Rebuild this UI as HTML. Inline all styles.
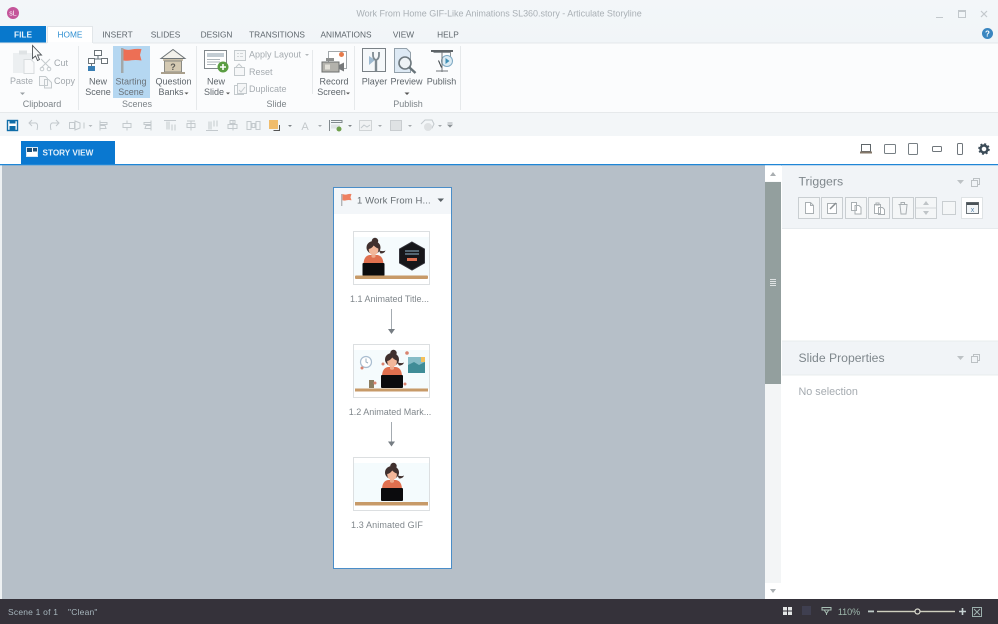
<!DOCTYPE html>
<html><head><meta charset="utf-8"><title>Work From Home GIF-Like Animations SL360.story - Articulate Storyline</title>
<style>
html,body{margin:0;padding:0;background:#fff;width:998px;height:624px;overflow:hidden}
svg{display:block;filter:blur(.35px)}
text{font-family:"Liberation Sans",sans-serif;font-size:9px;fill:#8a9096}
.t{font-size:9px;fill:#5f666c;text-anchor:middle}
.d{font-size:9px;fill:#a5abb0}
.g{font-size:9px;fill:#7d8489;text-anchor:middle}
.tab{font-size:8.300px;fill:#5e666c;text-anchor:middle}
.i{fill:none;stroke:#c4cacd;stroke-width:1}
.k{fill:none;stroke:#66727a;stroke-width:1}
.q{fill:none;stroke:#c3c9cd;stroke-width:1}
.b{fill:#f4f6f7;stroke:#c9ced1;stroke-width:1}
</style></head><body>
<svg width="998" height="624" viewBox="0 0 998 624" xmlns="http://www.w3.org/2000/svg">
<defs>
<linearGradient id="top" x1="0" y1="0" x2="0" y2="1"><stop offset="0" stop-color="#f3f6f9"/><stop offset="1" stop-color="#f1f5f8"/></linearGradient>
<symbol id="woman" viewBox="-15 -15 30 45" width="30" height="45" overflow="visible">
<path d="M-10 16q0-9 6-10h8q6 1 6 10z" fill="#e0704f"/>
<path d="M-2 4h4v4q-2 1.500-4 0z" fill="#edab8e"/>
<circle cx="1.500" cy="-8" r="3.200" fill="#40302e"/>
<ellipse cx="0" cy="-1.500" rx="7" ry="6.500" fill="#40302e"/>
<path d="M5 1q4 2 7 .5q-1 3-5 3z" fill="#40302e"/>
<path d="M-4.800 0q3-.5 5-3.500q2.500 2.500 4.600 3q.5 6-4.800 6.500q-4.800-.5-4.800-6z" fill="#f2b79a"/>
<rect x="-11" y="14" width="22" height="13" rx="1" fill="#0b0b0d"/>
</symbol>
</defs>

<!-- base -->
<rect width="998" height="624" fill="#fff"/>
<rect width="998" height="43" fill="url(#top)"/>
<rect y="43" width="998" height="69" fill="#fbfcfd"/>
<rect y="112" width="998" height="1" fill="#e6e9eb"/>
<rect y="113" width="998" height="23" fill="#f3f6f8"/>

<!-- title bar -->
<circle cx="13" cy="13" r="6" fill="#c4559a"/>
<text x="13" y="15.500" text-anchor="middle" style="font-size:7px;fill:#fff">sL</text>
<text x="499" y="16.500" text-anchor="middle" style="font-size:9px;fill:#a9b0b5;letter-spacing:-.03px">Work From Home GIF-Like Animations SL360.story - Articulate Storyline</text>
<rect x="936" y="17" width="7" height="1" fill="#c2c8cc"/>
<rect x="958.500" y="10.500" width="7" height="7" fill="none" stroke="#c2c8cc"/><rect x="958" y="10" width="8" height="2" fill="#c2c8cc"/>
<path d="M981 11l6 6m0-6l-6 6" stroke="#c2c8cc" stroke-width="1.200" fill="none"/>

<!-- tabs -->
<rect x="0" y="26" width="46" height="17" fill="#0878cc"/>
<text x="23" y="37.500" text-anchor="middle" style="font-size:8.300px;font-weight:bold;fill:#eaf4fb">FILE</text>
<path d="M47.500 43V26.500H92.500V43" fill="#fff" stroke="#e2e6e9"/>
<rect x="48" y="42" width="44" height="2" fill="#fbfcfd"/>
<text x="70" y="37.500" class="tab" style="fill:#2e8fd2">HOME</text>
<text x="117.500" y="37.500" class="tab">INSERT</text>
<text x="165.500" y="37.500" class="tab">SLIDES</text>
<text x="216.500" y="37.500" class="tab">DESIGN</text>
<text x="277" y="37.500" class="tab">TRANSITIONS</text>
<text x="346" y="37.500" class="tab">ANIMATIONS</text>
<text x="403.500" y="37.500" class="tab">VIEW</text>
<text x="448" y="37.500" class="tab">HELP</text>
<rect y="42.500" width="47" height="1" fill="#e4e8ea"/><rect x="93" y="42.500" width="905" height="1" fill="#e4e8ea"/>
<circle cx="987.500" cy="33.500" r="5.500" fill="#3a86c0"/>
<text x="987.500" y="36.500" text-anchor="middle" style="font-size:8px;font-weight:bold;fill:#fff">?</text>

<!-- ribbon group separators -->
<g fill="#e6e9eb">
<rect x="78" y="46" width="1" height="64"/><rect x="196" y="46" width="1" height="64"/>
<rect x="312" y="50" width="1" height="44"/><rect x="354" y="46" width="1" height="64"/><rect x="460" y="46" width="1" height="64"/>
</g>

<!-- clipboard -->
<rect x="13" y="53" width="20" height="20" fill="#eceff1"/><rect x="19" y="50.500" width="8" height="4" fill="#dfe3e5"/>
<path d="M24 59.500h7l3 3v11h-10z" fill="#f8f9fa" stroke="#d8dcde"/>
<path d="M41 59l9 9m0-9l-9 9" class="i"/><circle cx="42" cy="69" r="1.800" class="i"/><circle cx="49" cy="69" r="1.800" class="i"/>
<text x="54" y="66" class="d" style="fill:#a2a8ad">Cut</text>
<path d="M39.500 76.500h6l2 2v7h-8z M44.500 79.500h4l3 3v5.500h-7z" class="i" style="fill:#f7f8f9"/>
<text x="54" y="84" class="d" style="fill:#a2a8ad">Copy</text>
<text x="21.500" y="84" class="d" text-anchor="middle" style="fill:#a2a8ad">Paste</text>
<path d="M20 92.500h5l-2.500 2.500z" fill="#9ba1a5"/>
<text x="42" y="107" class="g">Clipboard</text>

<!-- scenes -->
<rect x="113" y="46" width="37" height="52" fill="#b5d7f1"/>
<rect x="94.500" y="50.500" width="7" height="5" fill="#fff" stroke="#6c7479"/>
<path d="M98 55.500v3.500M91 62v-3h13v3" class="k"/>
<rect x="88.500" y="58.500" width="6" height="5" fill="#fff" stroke="#6c7479"/><rect x="101.500" y="58.500" width="6" height="5" fill="#fff" stroke="#6c7479"/>
<path d="M91.500 63.500V66" class="k"/><rect x="88" y="66" width="7" height="5" fill="#3a7fb4"/>
<text x="98" y="84.500" class="t">New</text><text x="98" y="95" class="t">Scene</text>
<rect x="121" y="48" width="2.500" height="25" fill="#a2a8aa"/>
<path d="M123.500 49q4 1.500 8 .5t10-.5l-1.500 6 1.500 5.500q-6-1-10-.2t-8 .2z" fill="#ed6f55"/>
<text x="131" y="84.500" class="t" style="fill:#6a7178">Starting</text><text x="131" y="95" class="t" style="fill:#6a7178">Scene</text>
<path d="M161 58.500l12-9 12 9z" fill="#f3f1ea" stroke="#6f7578"/>
<rect x="163" y="59" width="20" height="2" fill="#c9bfa9"/>
<rect x="164.500" y="61" width="17" height="11" fill="#d4c9b2" stroke="#8a8a84"/>
<rect x="161" y="72" width="24" height="2" fill="#a99f8c"/>
<text x="173" y="70" text-anchor="middle" style="font-size:9px;font-weight:bold;fill:#5b5a55">?</text>
<text x="173.500" y="84.500" class="t">Question</text><text x="171" y="95" class="t">Banks</text>
<path d="M184.500 92.500h4l-2 2z" fill="#555"/>
<text x="137" y="107" class="g">Scenes</text>

<!-- slide -->
<rect x="204.500" y="50.500" width="22" height="18" fill="#fff" stroke="#80878b"/>
<rect x="207" y="53" width="17" height="4" fill="#c2ccd3"/>
<path d="M207 59.500h13M207 62h13M207 64.500h9" stroke="#aeb6bb" stroke-width="1"/>
<circle cx="223" cy="67" r="5.500" fill="#5b9d43"/><path d="M220 67h6m-3-3v6" stroke="#fff" stroke-width="1.600"/>
<text x="216" y="84.500" class="t">New</text><text x="214" y="95" class="t">Slide</text>
<path d="M226 92.500h4l-2 2z" fill="#555"/>
<rect x="234.500" y="50.500" width="11" height="10" class="i" style="fill:#f4f6f7"/><path d="M237 53.500h2m1 0h3m-6 3h2m1 0h3" stroke="#d2d6d8"/>
<text x="249" y="57.500" class="d">Apply Layout</text><path d="M305 54h4l-2 2z" fill="#b3b8bb"/>
<rect x="234.500" y="67.500" width="10" height="8" class="i" style="fill:#f6f7f8"/><path d="M236 67l3-3 3 3" class="i"/>
<text x="249" y="75" class="d">Reset</text>
<rect x="234.500" y="85.500" width="9" height="9" class="i"/><rect x="237.500" y="83.500" width="9" height="10" class="i" style="fill:#f5f6f7"/><path d="M239 90l2 2 4-5" class="i"/>
<text x="249" y="92" class="d">Duplicate</text>
<text x="276.500" y="107" class="g">Slide</text>

<!-- record -->
<rect x="328.500" y="51.500" width="18" height="17" fill="#fff" stroke="#a2a8ab"/><circle cx="341.500" cy="54.500" r="2.500" fill="#e67a4a"/>
<rect x="322" y="62" width="17" height="10" fill="#b3b2ac" stroke="#6e706f"/><rect x="325" y="64.500" width="5" height="5" fill="#e2e0d8"/>
<path d="M339 65l5-2.500v9L339 69z" fill="#76797a"/><rect x="326" y="58" width="8" height="3" fill="#8d8f8e"/>
<text x="334" y="84.500" class="t">Record</text><text x="331.500" y="95" class="t">Screen</text>
<path d="M346 92.500h4l-2 2z" fill="#555"/>

<!-- publish group -->
<path d="M362.500 48.500h23v23h-23z" fill="#f5f8fa" stroke="#7a8186"/>
<path d="M369 56l6 4-6 5z" fill="#9ebad0"/>
<path d="M376 60v11" stroke="#7e8a91" stroke-width="2.400" fill="none"/>
<path d="M373 52v3q0 4 3 5 3-1 3-5v-3" stroke="#7e8a91" stroke-width="1.800" fill="none"/>
<text x="374.500" y="84.500" class="t">Player</text>
<path d="M394.500 48.500h12l4 4v20h-16z" fill="#dde9f4" stroke="#93a0aa"/>
<circle cx="405" cy="63" r="6" fill="#eef3f6" stroke="#6d787e" stroke-width="1.600"/><path d="M409.500 67.500l6 5.500" stroke="#68747a" stroke-width="2.400"/>
<text x="406.500" y="84.500" class="t">Preview</text><path d="M404.500 92.500h5l-2.500 2.500z" fill="#555"/>
<path d="M431 51h22" stroke="#5e6468" stroke-width="2"/><path d="M433.500 52.500h17v5" fill="none" stroke="#8d9397"/>
<circle cx="447" cy="61" r="5.500" fill="#dcebf3" stroke="#7ea9c3"/><path d="M445.500 58l4 3-4 3z" fill="#3f8fb5"/>
<path d="M442 52v20M436 71h12" stroke="#70767a"/><path d="M438.500 60.500l3 7" stroke="#3c4347"/>
<text x="441.500" y="84.500" class="t">Publish</text>
<text x="408" y="107" class="g">Publish</text>

<!-- quick toolbar -->
<rect x="7.500" y="120.500" width="10" height="10" fill="#fff" stroke="#0f6da8" stroke-width="1.400"/>
<rect x="9.500" y="120" width="6" height="3.500" fill="#0f6da8"/><rect x="9.500" y="126" width="6" height="4" fill="#0f6da8"/>
<path d="M37 130q2-8-3-7h-5m3-3l-3 3 3 3" class="q" stroke-width="1.400"/>
<path d="M51 130q-2-8 3-7h5m-3-3l3 3-3 3" class="q"/>
<g class="q">
<rect x="69.500" y="122.500" width="5" height="6"/><path d="M75 121l5 2v5l-5 2zM84 122.500v6"/>
<path d="M100 120.500v10m0-8h7v2h-7m0 1h5l1 3h-6"/>
<path d="M127 120.500v3m0 4v3m-4-7h8v4h-8z"/>
<path d="M151 120.500v10m0-8h-7v2h7m0 1h-5l-1 3h6"/>
<path d="M164 120.500h12m-9 1v8m2-8v8m3-5v6m3-6v6"/>
<path d="M191 120.500v10m-4-7h8v4h-8z M187 121h8"/>
<path d="M206 130.500h12m-9-1v-8m2 8v-8m3 5v-6m3 6v-6"/>
<path d="M228 124.500h9v4h-9zM233 120.500v10M230 120.500h5v3h-5z"/>
<path d="M247 121.500h4v8h-4zM252 123.500h3v4h-3zM256 121.500h4v8h-4z"/>
</g>
<path d="M88.500 125h4l-2 2z" fill="#b5babd"/>
<rect x="269" y="120" width="9" height="9" fill="#f0bc6c"/><path d="M279.500 125v5.500h-6" fill="none" stroke="#555"/>
<path d="M288 125h4l-2 2z" fill="#808589"/>
<text x="305" y="130" text-anchor="middle" style="font-size:11px;fill:#c3c8cb">A</text><path d="M318 125h4l-2 2z" fill="#a5aaad"/>
<path d="M329.500 120v11M331 120.500h11v2h-11" stroke="#828a8e" fill="none"/><rect x="331" y="124.500" width="9" height="4" fill="#dfe3e5"/><circle cx="339" cy="129" r="2.500" fill="#6fa04c"/>
<path d="M348 125h4l-2 2z" fill="#808589"/>
<rect x="359.500" y="120.500" width="12" height="10" fill="#f0f2f3" stroke="#d0d4d6"/><path d="M361 128l3-3 3 2 3-2" class="q"/><path d="M378 125h4l-2 2z" fill="#a5aaad"/>
<rect x="390.500" y="120.500" width="11" height="10" fill="#dfe2e4" stroke="#c9cdd0"/><path d="M408 125h4l-2 2z" fill="#a5aaad"/>
<path d="M421 124l4-4h7l2 4-2 4h-2" class="q"/><circle cx="428" cy="127" r="4" fill="#dee1e3"/><path d="M438 125h4l-2 2z" fill="#a5aaad"/>
<path d="M447.500 123h5M448 125h4l-2 2z" stroke="#8b9195" stroke-width=".8" fill="#8b9195"/>

<!-- story view tab row -->
<rect x="21" y="141" width="94" height="23" fill="#0a78d0"/>
<rect x="26.500" y="147.500" width="11" height="9" fill="#fff" stroke="#d6e7f5"/><rect x="27" y="148" width="5" height="4" fill="#1d4f78"/><rect x="33" y="148" width="4" height="3.500" fill="#1d4f78"/>
<text x="42.500" y="155.500" style="font-size:8.200px;font-weight:bold;fill:#e3f0fa">STORY VIEW</text>
<rect y="164" width="998" height="1.400" fill="#1f86d6"/>
<!-- device icons -->
<rect x="861.500" y="144.500" width="9" height="7" fill="#fff" stroke="#5f666a"/><rect x="860" y="151.500" width="12" height="2" fill="#85786a"/>
<rect x="884.500" y="144.500" width="11" height="9" rx="1" fill="#fff" stroke="#777f84"/>
<rect x="908.500" y="143.500" width="9" height="11" rx="1" fill="#fff" stroke="#777f84"/>
<rect x="932.500" y="146.500" width="9" height="5" rx="1" fill="#fff" stroke="#6f767b"/>
<rect x="957.500" y="143.500" width="5" height="11" rx="1" fill="#fff" stroke="#6f767b"/>
<circle cx="984" cy="149" r="3.500" fill="none" stroke="#3c4c58" stroke-width="2.400"/>
<circle cx="984" cy="149" r="5" fill="none" stroke="#3c4c58" stroke-width="1.600" stroke-dasharray="2 1.930"/>

<!-- canvas -->
<rect x="0" y="165.400" width="2" height="434" fill="#eef1f3"/>
<rect x="2" y="165.400" width="763" height="434" fill="#b6bfc8"/>
<!-- scrollbar -->
<rect x="765" y="165.400" width="16" height="434" fill="#f3f5f6"/>
<rect x="765" y="165.400" width="16" height="16" fill="#fff"/>
<path d="M770 176l3-4 3 4z" fill="#a9aeb1"/>
<rect x="765" y="182" width="16" height="202" fill="#939f9e"/>
<path d="M770 279.500h6M770 281.500h6M770 283.500h6M770 285.500h6" stroke="#dfe3e3" stroke-width="1"/>
<rect x="765" y="583" width="16" height="16" fill="#fff"/>
<path d="M770 589l3 4 3-4z" fill="#a9aeb1"/>

<!-- story card -->
<rect x="333.500" y="187.500" width="118" height="381" fill="#fff" stroke="#4a8dc8"/>
<rect x="334" y="188" width="117" height="26" fill="#f3f6f9"/>
<rect x="341" y="194" width="1.400" height="12" fill="#b3b6b8"/>
<path d="M342.500 194q3 1 5 .3t4-.3l-1 3.300 1 3q-3-.6-5 0t-4 0z" fill="#ee8060"/>
<text x="357" y="203.500" style="font-size:9.500px;fill:#666d72;letter-spacing:.1px">1 Work From H...</text>
<path d="M437.500 198.500h6.500l-3.250 3.500z" fill="#5a6166"/>

<!-- thumb 1 -->
<rect x="353.500" y="231.500" width="76" height="53" fill="#fff" stroke="#dcdfe1"/>
<rect x="354" y="237" width="75" height="39" fill="#f5fbfd"/>
<use href="#woman" x="358.500" y="234" width="30" height="45"/>
<rect x="355" y="275.500" width="73" height="3.500" rx="1" fill="#c79a68"/>
<path d="M412 242l12.500 7v14l-12.500 7-12.500-7v-14z" fill="#17171a" stroke="#33333a"/>
<path d="M405 251h14M405 254h14" stroke="#8fb3c8" stroke-width="1"/>
<rect x="407" y="258" width="10" height="3" fill="#dd6f50"/>
<text x="389.500" y="302" text-anchor="middle" style="font-size:9px;fill:#80878c">1.1 Animated Title...</text>
<path d="M391.500 309v24" stroke="#a4abb1"/><path d="M388 329h7l-3.500 5z" fill="#767d83"/>

<!-- thumb 2 -->
<rect x="353.500" y="344.500" width="76" height="53" fill="#fff" stroke="#dcdfe1"/>
<rect x="354" y="350" width="75" height="39" fill="#f5fbfd"/>
<use href="#woman" x="377" y="346" width="30" height="45"/>
<rect x="355" y="388.500" width="73" height="3" fill="#c79a68"/>
<circle cx="366" cy="362" r="5.500" fill="#fff" stroke="#a9bdd0" stroke-width="1.200"/><path d="M366 358.500V362l2 1" stroke="#9aaebd" fill="none"/>
<rect x="408" y="357" width="17" height="16" fill="#86bcc7"/><path d="M408 365l6-3 5 3 6-3v11h-17z" fill="#3f8c97"/><rect x="421" y="357" width="4" height="5" fill="#f3c05c"/>
<rect x="369" y="380" width="5" height="8" fill="#8a7c60"/>
<g fill="#d9836f"><circle cx="362" cy="368" r="1.500"/><circle cx="383" cy="364" r="1.500"/><circle cx="407" cy="353" r="1.800"/><circle cx="375" cy="383" r="1.500"/><circle cx="405" cy="384" r="1.500"/></g>
<text x="390" y="415" text-anchor="middle" style="font-size:9px;fill:#80878c">1.2 Animated Mark...</text>
<path d="M391.500 422v24" stroke="#a4abb1"/><path d="M388 441.500h7l-3.500 5z" fill="#767d83"/>

<!-- thumb 3 -->
<rect x="353.500" y="457.500" width="76" height="53" fill="#fff" stroke="#dcdfe1"/>
<rect x="354" y="463" width="75" height="39" fill="#f4fbfd"/>
<use href="#woman" x="377" y="459" width="30" height="45"/>
<rect x="355" y="502" width="73" height="3.500" fill="#c79a68"/>
<text x="351" y="528" style="font-size:9px;fill:#80878c;letter-spacing:.12px">1.3 Animated GIF</text>

<!-- right panel -->
<rect x="782" y="165.400" width="216" height="434" fill="#fff"/>
<rect x="782" y="165.400" width="216" height="63" fill="#f1f4f7"/>
<rect x="782" y="228" width="216" height="1" fill="#e6eaed"/>
<text x="798.500" y="185.500" style="font-size:12.300px;fill:#7f878c">Triggers</text>
<path d="M957 180h7l-3.500 4z" fill="#bdc2c5"/>
<rect x="973.500" y="178.500" width="6" height="6" fill="none" stroke="#bcc1c4"/><rect x="971.500" y="180.500" width="6" height="6" fill="#f1f4f7" stroke="#bcc1c4"/>
<g class="b">
<rect x="798.500" y="197.500" width="21" height="21"/><rect x="821.500" y="197.500" width="21" height="21"/><rect x="845.500" y="197.500" width="21" height="21"/><rect x="868.500" y="197.500" width="21" height="21"/><rect x="892.500" y="197.500" width="21" height="21"/><rect x="915.500" y="197.500" width="21" height="21"/><rect x="942.500" y="201.500" width="13" height="13"/>
</g>
<rect x="961.500" y="197.500" width="21" height="21" fill="#fff" stroke="#dfe3e5"/>
<path d="M805.500 202.500h5l3 3v8h-8zM810.500 202.500v3h3" fill="#fff" stroke="#a9afb2"/>
<rect x="827.500" y="203.500" width="9" height="10" fill="#fff" stroke="#a9afb2"/><path d="M830 209l6-6" stroke="#888e91" stroke-width="1.500"/>
<path d="M851.500 202.500h5v8h-5zM855 205.500h4l2 2v6.500h-6z" fill="#fff" stroke="#a9afb2"/>
<path d="M874.500 204.500h6v9h-6zM878.500 207.500h4l2 2v5h-6z M876 203h3v2h-3z" fill="#fff" stroke="#a9afb2"/>
<path d="M898.500 204.500h9M900 205l1 9h5l1-9M901 204v-1.500h3.500v1.500" fill="none" stroke="#a9afb2"/>
<path d="M923 205l3-4 3 4z" fill="#bfc4c7"/><path d="M923 211l3 4 3-4z" fill="#bfc4c7"/><path d="M916 208h20" stroke="#d2d6d8"/>
<rect x="966.500" y="202.500" width="12" height="11" fill="#f3f6f8" stroke="#6e767b"/><rect x="966.500" y="202.500" width="12" height="2.500" fill="#4a5257"/>
<text x="972.500" y="212" text-anchor="middle" style="font-size:7px;fill:#5b85ab">x</text>

<rect x="782" y="341" width="216" height="34" fill="#f1f4f7"/>
<rect x="782" y="340.500" width="216" height="1" fill="#e8ecee"/><rect x="782" y="374.500" width="216" height="1" fill="#e8ecee"/>
<text x="798.500" y="362" style="font-size:12.200px;fill:#7f878c">Slide Properties</text>
<path d="M957 356h7l-3.500 4z" fill="#bdc2c5"/>
<rect x="973.500" y="354.500" width="6" height="6" fill="none" stroke="#bcc1c4"/><rect x="971.500" y="356.500" width="6" height="6" fill="#f1f4f7" stroke="#bcc1c4"/>
<text x="798.500" y="395" style="font-size:10.800px;fill:#a5abb0">No selection</text>

<!-- status bar -->
<rect y="599" width="998" height="25" fill="#35323a"/>
<text x="8" y="615" style="font-size:8.500px;fill:#a7b6bd;letter-spacing:.2px">Scene 1 of 1</text>
<text x="68" y="615" style="font-size:8.500px;fill:#a7b6bd;letter-spacing:.2px">"Clean"</text>
<g fill="#e4e6e6"><rect x="783" y="607" width="4" height="3.500"/><rect x="788" y="607" width="4" height="3.500"/><rect x="783" y="611.500" width="4" height="3.500"/><rect x="788" y="611.500" width="4" height="3.500"/></g>
<rect x="802" y="606" width="9" height="9" fill="#3f3f50"/>
<path d="M822 607.500h9v2.500h-9zM824.500 610.500l2 3 2-3M826.500 613v2" fill="none" stroke="#a9c0b5"/>
<text x="849" y="615" text-anchor="middle" style="font-size:9px;fill:#9fb9ad">110%</text>
<rect x="868" y="610.500" width="6" height="1.800" fill="#bdc9c6"/>
<rect x="877" y="610.800" width="78" height="1.400" fill="#cfd0c0"/>
<circle cx="917.500" cy="611.500" r="2.500" fill="#35323a" stroke="#dcdcd0" stroke-width="1.200"/>
<path d="M959 611.500h7m-3.500-3.500v7" stroke="#c6d2d2" stroke-width="1.600"/>
<rect x="972.500" y="607.500" width="9" height="9" fill="none" stroke="#9db0ad"/><path d="M974 609l6 6m0-6l-6 6" stroke="#9db0ad"/>

<!-- cursor -->
<path d="M32.500 45.500v13l3-2.500 2 4.500 2-1-2-4.500h4z" fill="#f8f9f9" stroke="#4e5357" stroke-width=".9"/>
</svg>
</body></html>
